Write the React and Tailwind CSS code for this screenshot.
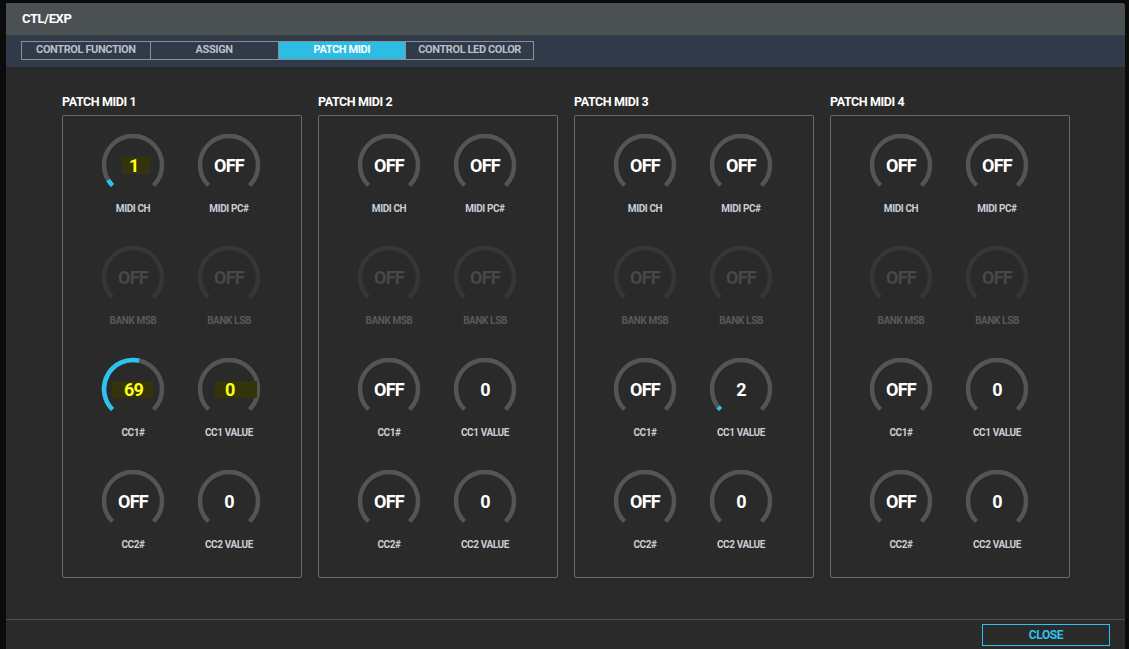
import React from "react";

const R = 29;
const C = 32;

function point(f) {
    const theta = ((225 - f * 270) * Math.PI) / 180;
    return [C + R * Math.cos(theta), C - R * Math.sin(theta)];
}

const boxes = {
    ch: "ml-[21px] w-[28px] pl-[7px]",
    cc: "ml-[11px] w-[41px] pl-[12px]",
    val: "ml-[18px] w-[42px] pl-[10px]",
};

function Knob({ value, label, frac = 0, box, dim }) {
    const [sx, sy] = point(0);
    const [ex, ey] = point(1);
    const [vx, vy] = point(frac);
    const large = frac * 270 > 180 ? 1 : 0;
    let valueClass = dim ? "text-[#484848]" : "text-white";
    if (box) valueClass = "bg-[#34340c] text-[#ffff1a] text-left " + boxes[box];
    return (
        <div className="flex flex-col items-center">
            <div className="relative w-16 h-16">
                <svg width="64" height="64" viewBox="0 0 64 64" className="absolute inset-0">
                    <path
                        d={`M ${sx} ${sy} A ${R} ${R} 0 1 1 ${ex} ${ey}`}
                        fill="none"
                        stroke={dim ? "#363636" : "#555555"}
                        strokeWidth="4.5"
                    />
                    {frac > 0 && (
                        <path
                            d={`M ${sx} ${sy} A ${R} ${R} 0 ${large} 1 ${vx} ${vy}`}
                            fill="none"
                            stroke="#2cc3ee"
                            strokeWidth="4.5"
                        />
                    )}
                </svg>
                <div
                    className={
                        "absolute inset-0 flex items-center pt-[1px] " +
                        (box ? "justify-start" : "justify-center")
                    }
                >
                    <span
                        className={
                            "text-[18px] leading-[17px] font-bold tracking-[-0.8px] " + valueClass
                        }
                    >
                        {value}
                    </span>
                </div>
            </div>
            <div
                className={
                    "mt-[6px] text-[10px] leading-[12px] font-bold tracking-[-0.4px] whitespace-nowrap " +
                    (dim ? "text-[#555a60]" : "text-[#c9cfd8]")
                }
            >
                {label}
            </div>
        </div>
    );
}

function Panel({ index, knobs }) {
    return (
        <div className="w-[240px]">
            <h3 className="text-white text-[12.5px] leading-[14px] font-bold tracking-[-0.4px] mb-[6px]">
                PATCH MIDI {index}
            </h3>
            <div className="h-[463px] border border-[#6a6a6a] rounded-[2px] pt-[17px] px-[22px]">
                <div className="grid grid-cols-[96px_96px] gap-y-[30px]">
                    {knobs.map((k) => (
                        <Knob key={k.label} {...k} />
                    ))}
                </div>
            </div>
        </div>
    );
}

const base = (cc1, cc1v) => [
    { label: "MIDI CH", value: "OFF" },
    { label: "MIDI PC#", value: "OFF" },
    { label: "BANK MSB", value: "OFF", dim: true },
    { label: "BANK LSB", value: "OFF", dim: true },
    cc1,
    cc1v,
    { label: "CC2#", value: "OFF" },
    { label: "CC2 VALUE", value: "0" },
];

const panels = [
    [
        { label: "MIDI CH", value: "1", frac: 0.05, box: "ch" },
        { label: "MIDI PC#", value: "OFF" },
        { label: "BANK MSB", value: "OFF", dim: true },
        { label: "BANK LSB", value: "OFF", dim: true },
        { label: "CC1#", value: "69", frac: 0.545, box: "cc" },
        { label: "CC1 VALUE", value: "0", box: "val" },
        { label: "CC2#", value: "OFF" },
        { label: "CC2 VALUE", value: "0" },
    ],
    base({ label: "CC1#", value: "OFF" }, { label: "CC1 VALUE", value: "0" }),
    base({ label: "CC1#", value: "OFF" }, { label: "CC1 VALUE", value: "2", frac: 0.025 }),
    base({ label: "CC1#", value: "OFF" }, { label: "CC1 VALUE", value: "0" }),
];

const tabs = ["CONTROL FUNCTION", "ASSIGN", "PATCH MIDI", "CONTROL LED COLOR"];

export default function App() {
    return (
        <div
            className="w-[1129px] h-[649px] bg-[#0b0b0c] overflow-hidden pt-[3px] pl-[6px]"
            style={{ fontFamily: "Roboto, 'Liberation Sans', sans-serif" }}
        >
            <div className="w-[1119px] h-[646px] flex flex-col bg-[#2a2a2a] rounded-tr-[3px]">
                <div className="h-[32px] bg-[#4b5053] flex items-center px-[16px] rounded-tr-[3px]">
                    <span className="text-white text-[13px] font-bold tracking-[-0.4px]">CTL/EXP</span>
                </div>
                <div className="h-[32px] bg-[#313a48] pt-[6px] px-[15px]">
                    <div className="flex border border-[#8b9097] w-[513px] h-[19px]">
                        {tabs.map((t, i) => (
                            <div
                                key={t}
                                className={
                                    "w-[128px] flex items-center justify-center text-[11px] font-bold tracking-[-0.4px] " +
                                    (i > 0 ? "border-l border-[#8b9097] " : "") +
                                    (t === "PATCH MIDI" ? "bg-[#2dbde4] text-white" : "text-[#b9bfc9]")
                                }
                            >
                                {t}
                            </div>
                        ))}
                    </div>
                </div>
                <div className="h-[552px] pt-[28px] pl-[56px] flex gap-[16px]">
                    {panels.map((k, i) => (
                        <Panel key={i} index={i + 1} knobs={k} />
                    ))}
                </div>
                <div className="flex-1 border-t border-[#4f4f4f] flex justify-end items-start pt-[4px] pr-[15px]">
                    <button className="w-[128px] h-[22px] border-[1.5px] border-[#2cc3ee] text-[#2cc3ee] text-[12px] font-bold tracking-[-0.4px] flex items-center justify-center">
                        CLOSE
                    </button>
                </div>
            </div>
        </div>
    );
}
